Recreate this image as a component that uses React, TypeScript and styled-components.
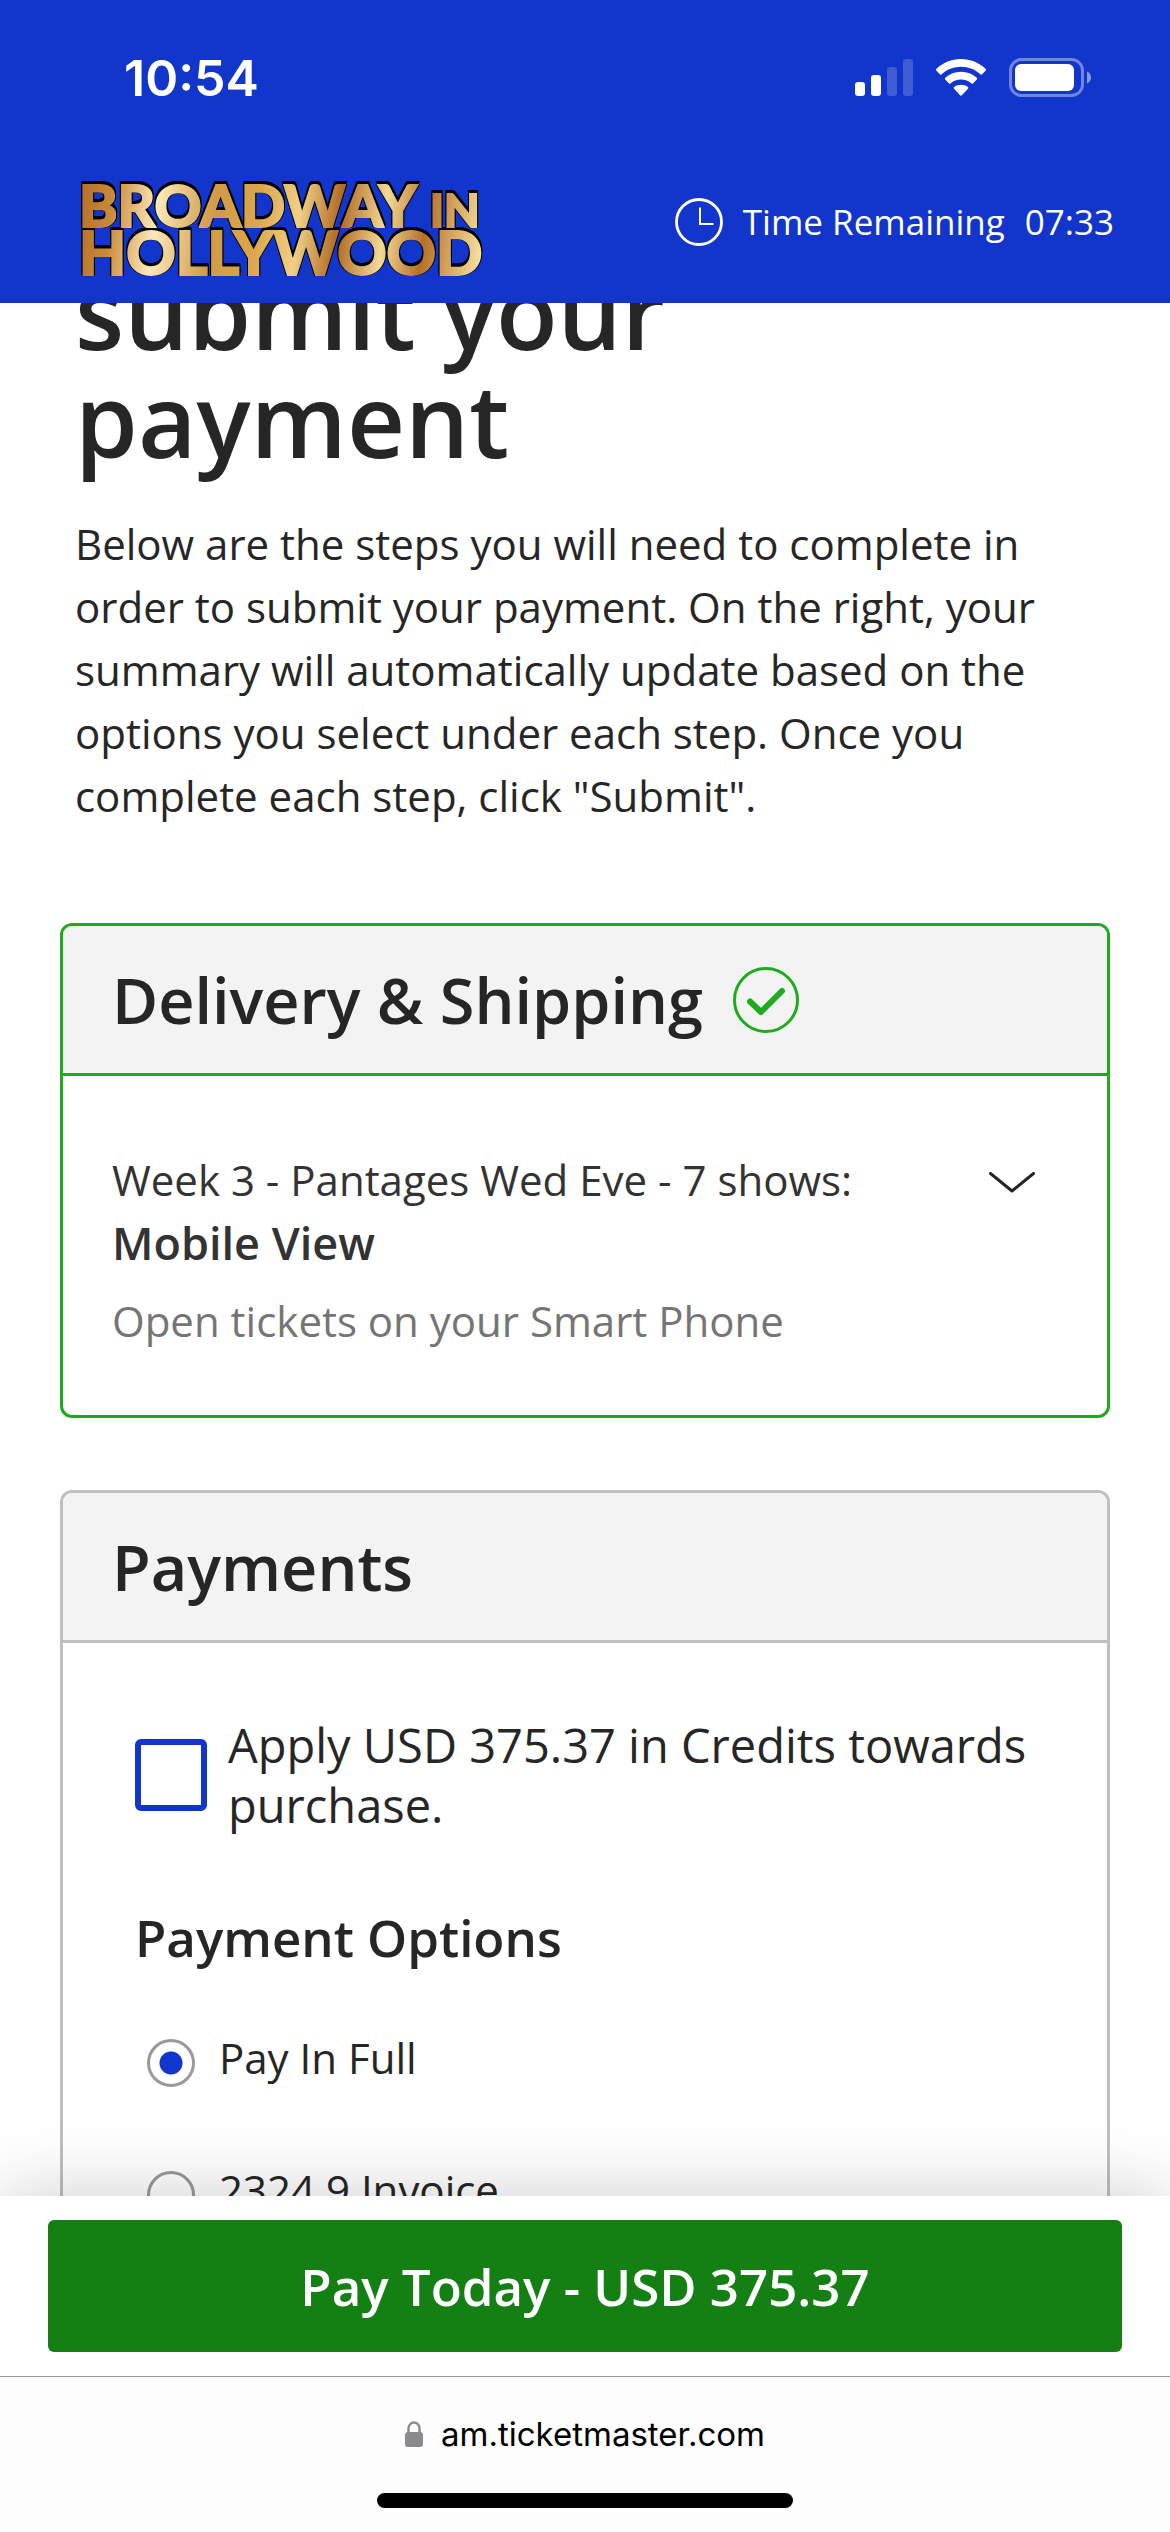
import React, { useState } from 'react';
import styled, { createGlobalStyle } from 'styled-components';

const BLUE = '#1235cc';
const GREEN = '#1eac1e';
const INK = '#262626';

const GlobalStyle = createGlobalStyle`
  *, *::before, *::after { box-sizing: border-box; }
  body { margin: 0; background: #fff; }
  h1, h2, h3, p, fieldset { margin: 0; padding: 0; border: 0; }
  button, input { font: inherit; }
`;

const Screen = styled.div`
  height: 100vh;
  display: grid;
  grid-template-rows: auto minmax(0, 1fr) auto auto;
  font-family: 'Open Sans', Lato, sans-serif;
  font-size: 42px;
  line-height: 63px;
  color: ${INK};
`;

const TopBar = styled.header`
  background: ${BLUE};
  color: #fff;
`;

const StatusBar = styled.div`
  height: 156px;
  padding: 0 78px 0 124px;
  display: flex;
  align-items: center;
  justify-content: space-between;
`;

const Clock = styled.time`
  font: 600 50px/60px Inter, sans-serif;
`;

const StatusIcons = styled.div`
  display: flex;
  align-items: center;
  gap: 23px;
  svg { display: block; }
`;

const Masthead = styled.div`
  height: 147px;
  padding: 0 56px 16px 80px;
  display: flex;
  align-items: center;
  justify-content: space-between;
`;

const Timer = styled.div`
  display: flex;
  align-items: center;
  gap: 20px;
  font-size: 35px;
  line-height: 48px;
`;

const Content = styled.main`
  overflow: hidden;
  padding: 0 60px;
`;

const Intro = styled.section`
  padding: 0 15px;
  margin-bottom: 96px;
`;

const Title = styled.h1`
  max-width: 800px;
  margin-top: -46px;
  margin-bottom: 39px;
  font-size: 101px;
  line-height: 108px;
  font-weight: 600;
`;

const Lead = styled.p`
  max-width: 980px;
`;

const Card = styled.section<{ $line: string }>`
  --line: ${(p) => p.$line};
  border: 3px solid var(--line);
  border-radius: 12px;
  overflow: hidden;
  margin-bottom: 72px;
`;

const CardHeader = styled.header`
  height: 150px;
  padding: 0 49px;
  display: flex;
  align-items: center;
  gap: 30px;
  background: #f3f3f3;
  border-bottom: 3px solid var(--line);
`;

const CardTitle = styled.h2`
  font-size: 63px;
  line-height: 78px;
  font-weight: 600;
`;

const DeliveryBody = styled.div`
  padding: 72px 72px 63px 49px;
  display: flex;
  align-items: flex-start;
  justify-content: space-between;
  color: #333;
`;

const Choice = styled.p`
  font-size: 45px;
  font-weight: 600;
`;

const Hint = styled.p`
  margin-top: 15px;
  color: #757575;
`;

const ToggleButton = styled.button`
  padding: 24px 0;
  border: 0;
  background: none;
  svg { display: block; }
`;

const PaymentsBody = styled.div`
  padding: 72px;
`;

const CreditRow = styled.label`
  display: flex;
  align-items: center;
  gap: 21px;
  font-size: 47px;
  line-height: 60px;
`;

const Checkbox = styled.input`
  appearance: none;
  flex: none;
  width: 72px;
  height: 72px;
  margin: 0;
  border: 6px solid ${BLUE};
  border-radius: 6px;
  background: #fff;
  &:checked { background: ${BLUE}; }
`;

const Options = styled.fieldset`
  padding-top: 69px;
`;

const OptionsTitle = styled.h3`
  margin-bottom: 56px;
  font-size: 51px;
  line-height: 66px;
  font-weight: 600;
`;

const Option = styled.label`
  display: flex;
  align-items: flex-start;
  gap: 24px;
  height: 63px;
  padding-left: 12px;
  margin-bottom: 69px;
`;

const Radio = styled.input`
  appearance: none;
  flex: none;
  width: 48px;
  height: 48px;
  margin: 13px 0 0;
  border: 3px solid #999;
  border-radius: 50%;
  background: #fff;
  &:checked { background: radial-gradient(circle, ${BLUE} 11px, #fff 12px); }
`;

const PayBar = styled.div`
  position: relative;
  padding: 24px 48px;
  background: #fff;
  box-shadow: 0 0 75px rgba(0, 0, 0, 0.2);
`;

const PayButton = styled.button`
  display: block;
  width: 100%;
  height: 132px;
  border: 0;
  border-radius: 6px;
  background: #148014;
  color: #fff;
  font-size: 51px;
  font-weight: 600;
`;

const BrowserBar = styled.footer`
  position: relative;
  height: 156px;
  padding: 33px 0 24px;
  display: flex;
  flex-direction: column;
  align-items: center;
  justify-content: space-between;
  border-top: 1px solid #9a9a9e;
  background: #fdfdfe;
`;

const Address = styled.a`
  display: flex;
  align-items: center;
  gap: 18px;
  font: 400 33px/48px Inter, sans-serif;
  color: #000;
  text-decoration: none;
`;

const HomeIndicator = styled.div`
  width: 416px;
  height: 15px;
  border-radius: 8px;
  background: #000;
`;

const LogoArt = styled.svg`
  overflow: visible;
  font-family: Lato, sans-serif;
  font-weight: 900;
  filter: drop-shadow(0 -3px 0 #000) drop-shadow(1px 0 0 #000) drop-shadow(-1px 0 0 #000);
  text {
    fill: url(#gold);
    stroke: url(#gold);
    stroke-width: 2px;
  }
`;

function SignalIcon() {
  return (
    <svg width="58" height="38" viewBox="0 0 58 38" fill="#fff" aria-hidden="true">
      <rect x="0" y="23" width="10" height="14" rx="3" />
      <rect x="16" y="16" width="10" height="21" rx="3" />
      <rect x="32" y="8" width="10" height="29" rx="3" opacity="0.2" />
      <rect x="48" y="0" width="10" height="37" rx="3" opacity="0.2" />
    </svg>
  );
}

function WifiIcon() {
  return (
    <svg width="50" height="38" viewBox="0 0 50 38" fill="#fff" aria-hidden="true">
      <path d="M25 0C34.500 0 43 3.700 49.500 9.700Q50.500 10.700 49.500 11.700L46 15.400Q45.300 16 44.600 15.400C39.500 10.500 32.500 7.700 25 7.700S10.500 10.500 5.400 15.400Q4.700 16 4 15.400L.5 11.700Q-.5 10.700 .5 9.700C7 3.700 15.500 0 25 0Z" />
      <path d="M25 12.800C31 12.800 36.500 15 40.800 18.800Q41.600 19.700 40.800 20.600L37 24.400Q36.300 25 35.600 24.400C32.700 21.800 29 20.500 25 20.500S17.300 21.800 14.400 24.400Q13.700 25 13 24.400L9.200 20.600Q8.400 19.700 9.200 18.800C13.500 15 19 12.800 25 12.800Z" />
      <path d="M25 25.700C27.700 25.700 30 26.500 32 28Q32.800 28.900 32 29.800L25.900 36.300Q25 37.200 24.100 36.300L18 29.800Q17.200 28.900 18 28C20 26.500 22.300 25.700 25 25.700Z" />
    </svg>
  );
}

function BatteryIcon() {
  return (
    <svg width="83" height="40" viewBox="0 0 83 40" aria-hidden="true">
      <rect x="1.500" y="1.500" width="72" height="36" rx="11" fill="none" stroke="#fff" strokeOpacity="0.4" strokeWidth="3" />
      <rect x="6" y="6" width="59" height="27" rx="6" fill="#fff" />
      <path d="M78 13.500c2.600 1 4 3.400 4 6s-1.400 5-4 6Z" fill="#fff" fillOpacity="0.5" />
    </svg>
  );
}

function TimerIcon() {
  return (
    <svg width="48" height="48" viewBox="0 0 48 48" fill="none" stroke="#fff" aria-hidden="true">
      <circle cx="24" cy="24" r="22.500" strokeWidth="2.800" />
      <path d="M25 9.500V26H38.500" strokeWidth="2" />
    </svg>
  );
}

function Logo() {
  return (
    <LogoArt width="404" height="110" viewBox="0 0 404 110" role="img" aria-label="Broadway in Hollywood">
      <defs>
        <linearGradient id="gold" gradientUnits="userSpaceOnUse" x1="0" y1="30" x2="404" y2="80">
          <stop offset="0" stopColor="#b5702a" />
          <stop offset="0.080" stopColor="#c98a3a" />
          <stop offset="0.190" stopColor="#fbe9b8" />
          <stop offset="0.330" stopColor="#d09a48" />
          <stop offset="0.440" stopColor="#dca64e" />
          <stop offset="0.540" stopColor="#f0cf85" />
          <stop offset="0.640" stopColor="#b06a22" />
          <stop offset="0.750" stopColor="#f2d996" />
          <stop offset="0.850" stopColor="#b5702a" />
          <stop offset="1" stopColor="#fae3a4" />
        </linearGradient>
      </defs>
      <text x="-1" y="60" fontSize="58">BROADWAY</text>
      <text x="350" y="60" fontSize="46">IN</text>
      <text x="-1" y="108" fontSize="61">HOLLYWOOD</text>
    </LogoArt>
  );
}

function CheckBadge() {
  return (
    <svg width="66" height="66" viewBox="0 0 66 66" fill="none" stroke={GREEN} aria-label="Completed" role="img">
      <circle cx="33" cy="33" r="31.500" strokeWidth="3" />
      <path d="M17 34.500 28 45 49 24" strokeWidth="6" strokeLinecap="round" strokeLinejoin="round" />
    </svg>
  );
}

function ChevronDown() {
  return (
    <svg width="46" height="22" viewBox="0 0 46 22" fill="none" stroke={INK} strokeWidth="3" aria-hidden="true">
      <path d="M1.500 1.500 23 19 44.500 1.500" strokeLinecap="round" strokeLinejoin="round" />
    </svg>
  );
}

function LockIcon() {
  return (
    <svg width="18" height="26" viewBox="0 0 18 26" aria-hidden="true">
      <rect x="0" y="11" width="18" height="15" rx="3" fill="#8a8a8e" />
      <path d="M3.500 12V7.500a5.500 6 0 0 1 11 0V12" fill="none" stroke="#8a8a8e" strokeWidth="2.400" />
    </svg>
  );
}

const options = ['Pay In Full', '2324 9 Invoice'];

export default function App() {
  const [selected, setSelected] = useState(options[0]);
  return (
    <>
      <GlobalStyle />
      <Screen>
        <TopBar>
          <StatusBar>
            <Clock>10:54</Clock>
            <StatusIcons>
              <SignalIcon />
              <WifiIcon />
              <BatteryIcon />
            </StatusIcons>
          </StatusBar>
          <Masthead>
            <Logo />
            <Timer>
              <TimerIcon />
              <span>Time Remaining</span>
              <span>07:33</span>
            </Timer>
          </Masthead>
        </TopBar>
        <Content>
          <Intro>
            <Title>submit your payment</Title>
            <Lead>
              Below are the steps you will need to complete in order to submit your payment. On the
              right, your summary will automatically update based on the options you select under
              each step. Once you complete each step, click "Submit".
            </Lead>
          </Intro>
          <Card $line={GREEN}>
            <CardHeader>
              <CardTitle>Delivery &amp; Shipping</CardTitle>
              <CheckBadge />
            </CardHeader>
            <DeliveryBody>
              <div>
                <p>Week 3 - Pantages Wed Eve - 7 shows:</p>
                <Choice>Mobile View</Choice>
                <Hint>Open tickets on your Smart Phone</Hint>
              </div>
              <ToggleButton aria-label="Show delivery options">
                <ChevronDown />
              </ToggleButton>
            </DeliveryBody>
          </Card>
          <Card $line="#bfbfbf">
            <CardHeader>
              <CardTitle>Payments</CardTitle>
            </CardHeader>
            <PaymentsBody>
              <CreditRow>
                <Checkbox type="checkbox" />
                <span>Apply USD 375.37 in Credits towards purchase.</span>
              </CreditRow>
              <Options aria-labelledby="payment-options">
                <OptionsTitle id="payment-options">Payment Options</OptionsTitle>
                {options.map((name) => (
                  <Option key={name}>
                    <Radio
                      type="radio"
                      name="payment-option"
                      checked={selected === name}
                      onChange={() => setSelected(name)}
                    />
                    <span>{name}</span>
                  </Option>
                ))}
              </Options>
            </PaymentsBody>
          </Card>
        </Content>
        <PayBar>
          <PayButton>Pay Today - USD 375.37</PayButton>
        </PayBar>
        <BrowserBar>
          <Address href="#">
            <LockIcon />
            <span>am.ticketmaster.com</span>
          </Address>
          <HomeIndicator />
        </BrowserBar>
      </Screen>
    </>
  );
}
